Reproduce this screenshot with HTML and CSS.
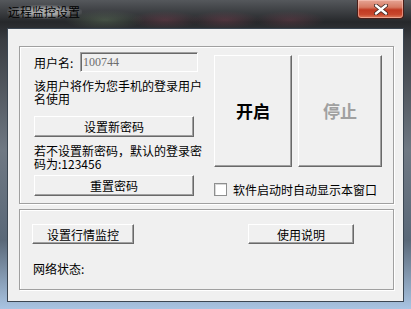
FILE: index.html
```html
<!DOCTYPE html>
<html lang="zh-CN">
<head>
    <meta charset="UTF-8">
    <title>远程监控设置</title>
    <link rel="stylesheet" href="styles.css">
</head>
<body>
    <div class="window">
        <!-- Title bar -->
        <div class="titlebar">
            <span class="title">远程监控设置</span>
            <div class="close-btn">
                <svg width="14" height="11" viewBox="0 0 14 11">
                    <path d="M2 1.5 L12 9.5 M12 1.5 L2 9.5" stroke="#3a2420" stroke-width="4" stroke-linecap="round"/>
                    <path d="M2 1.5 L12 9.5 M12 1.5 L2 9.5" stroke="#ffffff" stroke-width="2.4" stroke-linecap="round"/>
                </svg>
            </div>
        </div>

        <!-- Client area -->
        <div class="client">
            <div class="group group-main">
                <div class="col-left">
                    <div class="user-row">
                        <span class="label">用户名:</span>
                        <div class="textbox">100744</div>
                    </div>
                    <p class="note note-first">该用户将作为您手机的登录用户名使用</p>
                    <div class="btn btn-wide btn-first">设置新密码</div>
                    <p class="note note-second">若不设置新密码，默认的登录密码为:123456</p>
                    <div class="btn btn-wide btn-second">重置密码</div>
                </div>
                <div class="col-right">
                    <div class="big-buttons">
                        <div class="btn btn-big btn-start">开启</div>
                        <div class="btn btn-big btn-stop">停止</div>
                    </div>
                    <div class="check-row">
                        <span class="checkbox"></span>
                        <span class="check-label">软件启动时自动显示本窗口</span>
                    </div>
                </div>
            </div>

            <div class="group group-bottom">
                <div class="btn-row">
                    <div class="btn btn-quote">设置行情监控</div>
                    <div class="btn btn-help">使用说明</div>
                </div>
                <div class="status">网络状态:</div>
            </div>
        </div>
    </div>
</body>
</html>
```

FILE: styles.css
```css
* {
    margin: 0;
    padding: 0;
    box-sizing: border-box;
}

body {
    width: 411px;
    height: 309px;
    overflow: hidden;
    font-family: "Noto Sans CJK SC", "Liberation Sans", sans-serif;
    font-size: 12px;
    color: #000;
}

/* Aero glass frame */
.window {
    width: 411px;
    height: 309px;
    padding: 0 7px 7px 7px;
    background:
        radial-gradient(ellipse 40px 10px at 105px 20px, rgba(120, 150, 110, 0.35), transparent),
        radial-gradient(ellipse 35px 9px at 165px 20px, rgba(150, 70, 90, 0.35), transparent),
        radial-gradient(ellipse 35px 9px at 225px 20px, rgba(150, 70, 90, 0.35), transparent),
        radial-gradient(ellipse 35px 9px at 290px 20px, rgba(150, 70, 90, 0.3), transparent),
        linear-gradient(180deg, #55585c 0, #26282b 22px, #3a3d42 40px, #6f7883 150px, #5a6878 240px, #a9c4e2 309px);
}

.titlebar {
    height: 28px;
    position: relative;
}

.title {
    display: inline-block;
    margin-top: 5px;
    padding: 0 2px 0 1px;
    font-size: 12px;
    line-height: 14px;
    color: #000;
    background: radial-gradient(ellipse at center, rgba(255, 255, 255, 0.55) 30%, rgba(255, 255, 255, 0) 75%);
}

.close-btn {
    position: absolute;
    top: 0;
    right: 0;
    width: 47px;
    height: 19px;
    border: 1px solid #4a1e18;
    border-top: none;
    border-radius: 0 0 4px 4px;
    background: linear-gradient(180deg, #e6a595 0, #d67a63 40%, #c13a22 55%, #c8462c 80%, #de7d5c 100%);
    box-shadow: inset 0 0 0 1px rgba(255, 210, 200, 0.5);
    display: flex;
    align-items: center;
    justify-content: center;
}

.client {
    height: 274px;
    background-color: #f0f0f0;
    border: 1px solid #3b4652;
    padding: 17px 10px 0 11px;
}

/* Etched group boxes */
.group {
    width: 375px;
    border: 1px solid #a0a0a0;
    box-shadow: 1px 1px 0 #fff, inset 1px 1px 0 #fff;
}

.group-main {
    height: 158px;
    display: flex;
    gap: 10px;
    padding: 5px 0 0 14px;
}

.group-bottom {
    height: 81px;
    margin-top: 5px;
    padding: 14px 0 0 12px;
}

.col-left {
    width: 170px;
}

.user-row {
    display: flex;
    align-items: center;
    height: 20px;
}

.label {
    width: 46px;
    line-height: 13px;
}

.textbox {
    width: 118px;
    height: 20px;
    padding: 1px 0 0 2px;
    border: 1px solid;
    border-color: #a0a0a0 #fff #fff #a0a0a0;
    box-shadow: inset 1px 1px 0 #696969;
    font-family: "Liberation Serif", serif;
    font-size: 12px;
    line-height: 16px;
    color: #6d6d6d;
}

.note {
    line-height: 13px;
}

.note-first {
    margin-top: 7px;
}

.note-second {
    margin-top: 7px;
}

/* Classic 3D push button */
.btn {
    display: flex;
    align-items: center;
    justify-content: center;
    background-color: #f0f0f0;
    border: 1px solid;
    border-color: #fff #696969 #696969 #fff;
    box-shadow: inset -1px -1px 0 #a0a0a0;
    line-height: 13px;
}

.btn-wide {
    width: 160px;
    height: 21px;
}

.btn-first {
    margin-top: 11px;
}

.btn-second {
    margin-top: 5px;
}

.col-right {
    padding-top: 3px;
}

.big-buttons {
    display: flex;
    gap: 6px;
}

.btn-big {
    height: 112px;
    font-size: 17px;
    font-weight: bold;
    line-height: 20px;
}

.btn-start {
    width: 78px;
}

.btn-stop {
    width: 84px;
    color: #a0a0a0;
}

.check-row {
    display: flex;
    align-items: center;
    gap: 6px;
    margin-top: 16px;
}

.checkbox {
    width: 13px;
    height: 13px;
    background-color: #fff;
    border: 1px solid #8e8f8f;
    box-shadow: inset 1px 1px 0 #d8d8d8;
}

.check-label {
    line-height: 13px;
}

.btn-row {
    display: flex;
    height: 20px;
}

.btn-quote {
    width: 102px;
    height: 20px;
}

.btn-help {
    width: 106px;
    height: 20px;
    margin-left: 114px;
}

.status {
    margin-top: 18px;
    padding-left: 1px;
    line-height: 13px;
}
```
